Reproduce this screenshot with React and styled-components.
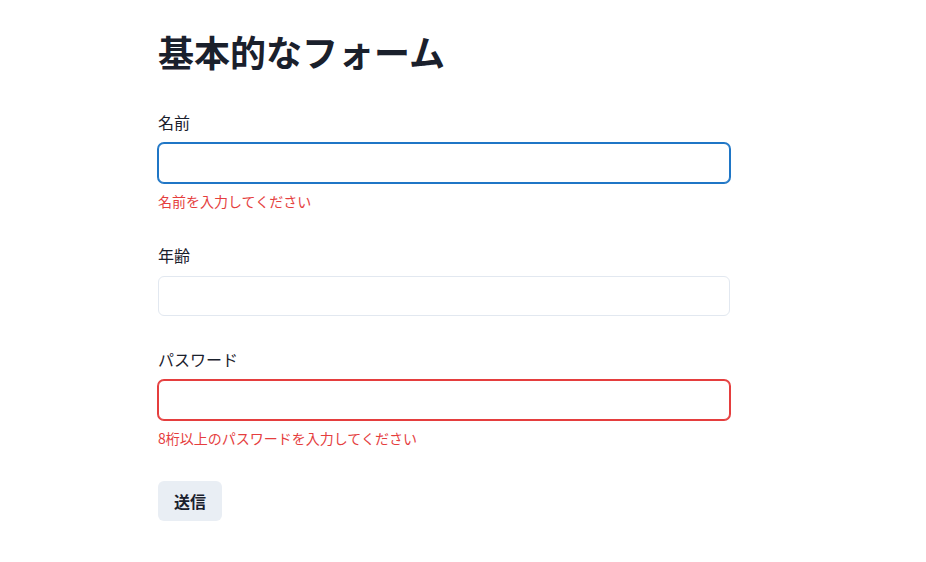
import React, { useState } from "react";
import styled, { createGlobalStyle, css } from "styled-components";

const GlobalStyle = createGlobalStyle`
  html, body {
    margin: 0;
    padding: 0;
    background: #ffffff;
  }
  body {
    font-family: "Noto Sans CJK JP", "Noto Sans", sans-serif;
    color: #1a202c;
  }
`;

const Page = styled.div`
  padding: 30px 0 40px 158px;
`;

const Container = styled.div`
  width: 572px;
`;

const Heading = styled.h1`
  margin: 0 0 38px;
  font-size: 36px;
  line-height: 1.2;
  font-weight: 700;
  color: #1a202c;
`;

const Form = styled.form`
  display: flex;
  flex-direction: column;
  gap: 32px;
  align-items: flex-start;
`;

const Field = styled.div`
  width: 100%;
  display: flex;
  flex-direction: column;
`;

const Label = styled.label`
  font-size: 16px;
  line-height: 22px;
  font-weight: 400;
  margin-bottom: 10px;
  color: #1a202c;
`;

const Input = styled.input`
  box-sizing: border-box;
  width: 100%;
  height: 40px;
  padding: 0 16px;
  font-size: 16px;
  font-family: inherit;
  border-radius: 6px;
  border: 1px solid #e2e8f0;
  background: #fff;
  outline: none;
  ${(p) =>
    p.$focused &&
    css`
      border-color: #1f76c6;
      box-shadow: 0 0 0 1px #1f76c6;
    `}
  ${(p) =>
    p.$invalid &&
    css`
      border-color: #e53e3e;
      box-shadow: 0 0 0 1px #e53e3e;
    `}
`;

const ErrorText = styled.div`
  margin-top: 8px;
  font-size: 14px;
  line-height: 21px;
  color: #e53e3e;
`;

const Button = styled.button`
  height: 40px;
  padding: 0 16px;
  border: none;
  border-radius: 6px;
  background: #e9eef4;
  color: #1a202c;
  font-family: inherit;
  font-size: 16px;
  font-weight: 700;
  cursor: pointer;
`;

export default function App() {
  const [name, setName] = useState("");
  const [age, setAge] = useState("");
  const [password, setPassword] = useState("");

  return (
    <>
      <GlobalStyle />
      <Page>
        <Container>
          <Heading>基本的なフォーム</Heading>
          <Form onSubmit={(e) => e.preventDefault()}>
            <Field>
              <Label>名前</Label>
              <Input
                $focused
                value={name}
                onChange={(e) => setName(e.target.value)}
              />
              <ErrorText>名前を入力してください</ErrorText>
            </Field>
            <Field>
              <Label>年齢</Label>
              <Input value={age} onChange={(e) => setAge(e.target.value)} />
            </Field>
            <Field>
              <Label>パスワード</Label>
              <Input
                $invalid
                type="password"
                value={password}
                onChange={(e) => setPassword(e.target.value)}
              />
              <ErrorText>8桁以上のパスワードを入力してください</ErrorText>
            </Field>
            <Button type="submit">送信</Button>
          </Form>
        </Container>
      </Page>
    </>
  );
}
